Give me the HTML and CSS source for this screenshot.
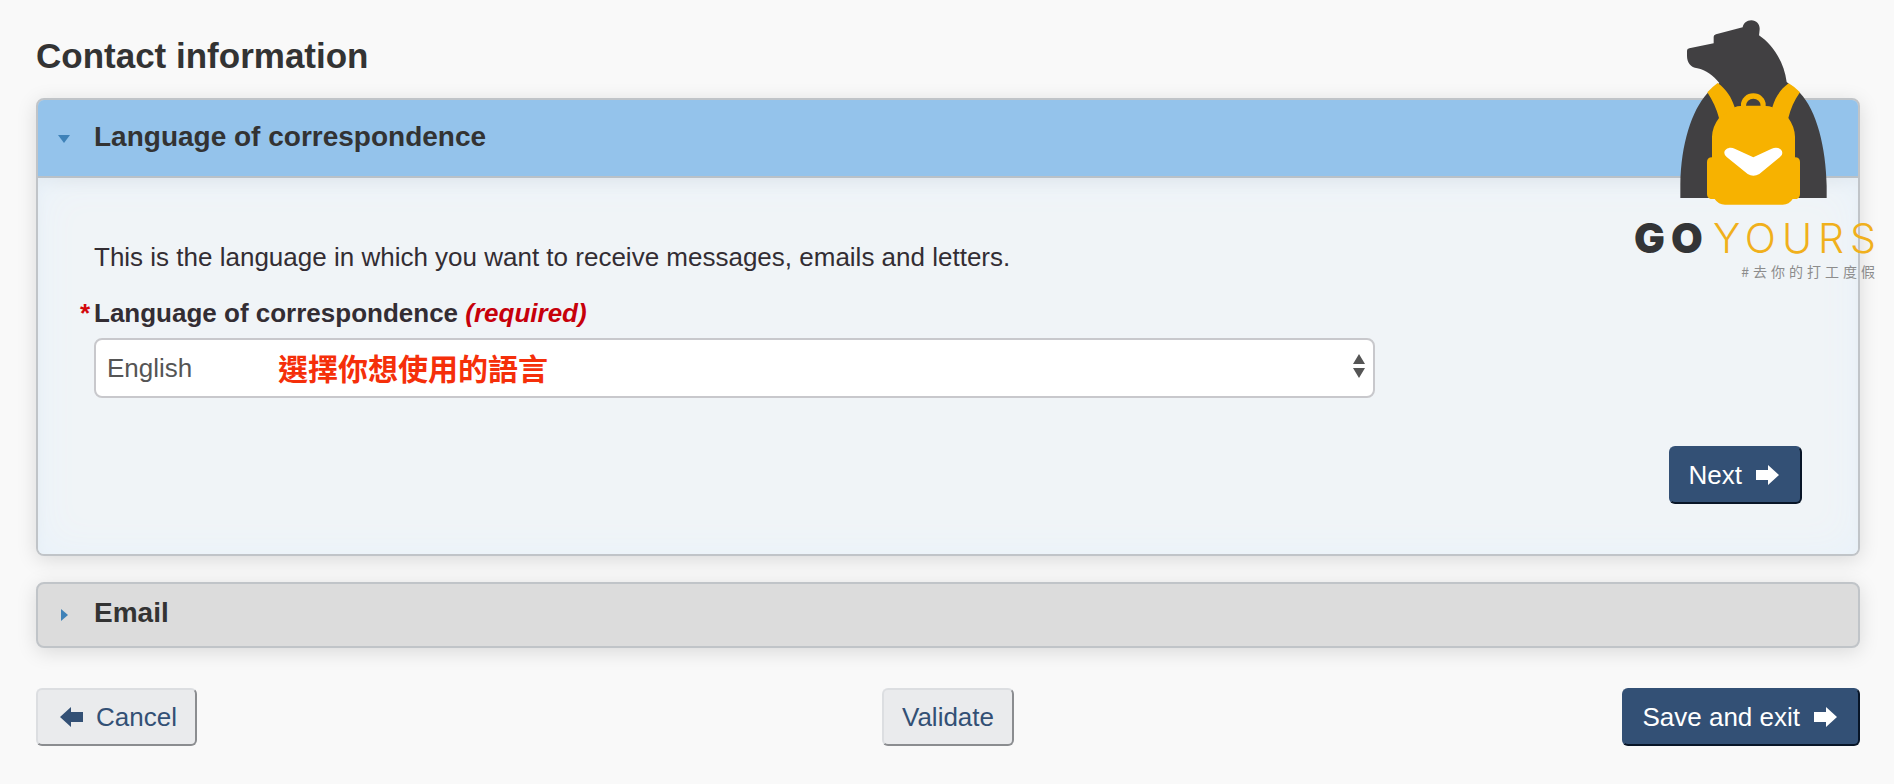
FILE: index.html
```html
<!DOCTYPE html>
<html lang="en">
<head>
    <meta charset="UTF-8">
    <meta name="viewport" content="width=device-width, initial-scale=1.0">
    <title>Contact information</title>
    <link rel="stylesheet" href="styles.css">
</head>
<body>
    <main>
        <h1>Contact information</h1>
        <form>
            <details class="panel" open>
                <summary>
                    <svg class="caret" viewBox="0 0 12 8"><path d="M0 0h12L6 8z"/></svg>
                    <h2>Language of correspondence</h2>
                </summary>
                <div class="panel-body">
                    <p>This is the language in which you want to receive messages, emails and letters.</p>
                    <label for="language">Language of correspondence <em>(required)</em></label>
                    <div class="select-box">
                        <select id="language" required>
                            <option>English</option>
                            <option>French</option>
                        </select>
                        <svg class="select-arrows" viewBox="0 0 12 24"><path d="M6 0l6 10H0zM6 24l6-10H0z"/></svg>
                        <span class="note" lang="zh-Hant">選擇你想使用的語言</span>
                    </div>
                    <div class="panel-actions">
                        <button type="button" class="btn btn-primary">Next
                            <svg class="arrow" viewBox="0 0 28 22"><path d="M2 6h12V1l11 10-11 10v-5H2z"/></svg>
                        </button>
                    </div>
                </div>
            </details>
            <details class="panel">
                <summary>
                    <svg class="caret" viewBox="0 0 12 12"><path d="M3 0v12l7-6z"/></svg>
                    <h2>Email</h2>
                </summary>
            </details>
            <div class="form-actions">
                <button type="button" class="btn">
                    <svg class="arrow" viewBox="0 0 28 22"><path d="M27 6H15V1L4 11l11 10v-5h12z"/></svg>
                    Cancel</button>
                <button type="button" class="btn">Validate</button>
                <button type="submit" class="btn btn-primary">Save and exit
                    <svg class="arrow" viewBox="0 0 28 22"><path d="M2 6h12V1l11 10-11 10v-5H2z"/></svg>
                </button>
            </div>
        </form>
    </main>
    <div class="logo">
        <svg class="logo-bear" viewBox="180 58 441 555">
            <!-- bear -->
            <path fill="#414042" d="M181 592V552C183 430 215 330 262 278L298 247C280 225 258 208 232 203C212 200 201 186 201 165V150Q201 144 208 143L281 128V108Q281 103 288 101L368 80C370 68 380 59 394 59C410 59 420 72 419 86Q418 98 417 104C455 130 492 180 500 244L540 277C590 330 618 440 620 555V592Z"/>
            <!-- backpack -->
            <g fill="#f7b200">
                <path d="M262 275Q275 260 293 247C318 265 335 290 344 320L350 360H300L297 352C290 325 278 300 262 275Z"/>
                <path d="M540 275Q525 259 506 248C482 265 465 290 457 320L450 360H502L505 352C512 325 522 300 540 275Z"/>
                <path d="M363 322V312A37 34 0 0 1 437 312V322Z"/>
                <path d="M344 320Q352 316 362 316H438Q448 316 457 320L505 352Q524 378 525 408V470Q540 470 540 484V580Q540 592 530 595H518Q508 612 488 612H315Q295 612 284 595H272Q261 592 261 580V484Q261 470 276 470V408Q277 378 297 352Z"/>
            </g>
            <path fill="#414042" d="M378 315a22 21 0 0 1 44 0Z"/>
            <path fill="#fff" d="M313 457C313 444 330 437 344 444L400 470L455 444C470 437 487 443 487 457Q487 464 480 469L418 520Q400 531 383 520L320 469Q313 463 313 457Z"/>
        </svg>
        <div class="logo-name"><b>GO</b>YOURS</div>
        <div class="logo-tag" lang="zh-Hant">#去你的打工度假</div>
    </div>
</body>
</html>
```

FILE: styles.css
```css
body {
    position: relative;
    margin: 0;
    background-color: #f9f9f9;
    color: #333;
    font-family: "Liberation Sans", Arial, "Noto Sans CJK TC", sans-serif;
    font-size: 26px;
    line-height: 36px;
}
main {
    padding: 34px 34px 36px 36px;
}
h1 {
    margin: 0 0 20px;
    font-size: 35px;
    line-height: 44px;
}
h2 {
    margin: 0;
    font-size: 28px;
    line-height: 38px;
}
.panel {
    margin-bottom: 26px;
    border: 2px solid #c0c4c8;
    border-radius: 8px;
    background-color: #dcdcdc;
    box-shadow: 0 4px 20px rgba(0, 0, 0, 0.13);
}
.panel summary {
    display: flex;
    align-items: center;
    gap: 24px;
    padding: 10px 20px 14px;
    list-style: none;
    cursor: pointer;
}
.panel[open] summary {
    padding: 18px 20px 20px;
    border-bottom: 2px solid #b9c1c8;
    border-radius: 6px 6px 0 0;
    background-color: #94c3eb;
}
.caret {
    width: 12px;
    margin-top: 4px;
    fill: #3f82b8;
}
.panel-body {
    padding: 61px 56px 50px;
    border-radius: 0 0 6px 6px;
    background-color: #f0f4f7;
    box-shadow: inset 0 0 40px #e8f2fb, inset 0 8px 16px -6px rgba(0, 0, 0, 0.12);
}
.panel-body p {
    margin: 0 0 20px;
    color: #332d33;
}
label {
    position: relative;
    display: block;
    margin-bottom: 7px;
    color: #332d33;
    font-weight: bold;
}
label::before {
    content: "*";
    position: absolute;
    right: 100%;
    margin-right: 4px;
    color: #d3080c;
}
label em {
    color: #c7000b;
}
.select-box {
    position: relative;
    width: 75%;
}
select {
    width: 100%;
    height: 60px;
    padding: 0 11px;
    border: 2px solid #c8c8cc;
    border-radius: 8px;
    background-color: #fff;
    color: #555;
    font: inherit;
    appearance: none;
}
.select-arrows {
    position: absolute;
    top: 16px;
    right: 10px;
    width: 12px;
    height: 24px;
    fill: #555;
    pointer-events: none;
}
.note {
    position: absolute;
    top: 11px;
    left: 184px;
    color: #f52f0a;
    font-family: "Noto Sans CJK TC", sans-serif;
    font-size: 30px;
    font-weight: 700;
    pointer-events: none;
}
.panel-actions {
    display: flex;
    justify-content: flex-end;
    margin-top: 48px;
}
.btn {
    display: inline-flex;
    align-items: center;
    gap: 12px;
    height: 58px;
    padding: 0 18px;
    border: 2px solid;
    border-color: #dcdee1 #8b8d90 #8b8d90 #dcdee1;
    border-radius: 6px;
    background-color: #eaebed;
    color: #335075;
    font: inherit;
    cursor: pointer;
}
.btn-primary {
    border-color: #335075 #081527 #081527 #335075;
    background-color: #335075;
    color: #fff;
}
.arrow {
    width: 28px;
    height: 22px;
    fill: currentColor;
}
.form-actions {
    display: grid;
    grid-template-columns: 1fr auto 1fr;
    padding-top: 14px;
}
.form-actions .btn:first-child {
    justify-self: start;
}
.form-actions .btn:last-child {
    justify-self: end;
}
.logo {
    position: absolute;
    top: 20px;
    right: 18px;
    width: 242px;
    text-align: right;
}
.logo-bear {
    display: block;
    width: 147px;
    margin-left: 46px;
}
.logo-name {
    display: flex;
    justify-content: space-between;
    margin-top: 11px;
    margin-right: -6px;
    color: #f0b01c;
    font-family: Inter, sans-serif;
    font-size: 41px;
    font-weight: 300;
    letter-spacing: 6px;
    line-height: 44px;
}
.logo-name b {
    color: #333436;
    font-weight: 900;
}
.logo-tag {
    margin-right: -3px;
    color: #8c8c8c;
    font-family: "Noto Sans CJK TC", sans-serif;
    font-size: 14px;
    letter-spacing: 4px;
    line-height: 22px;
}
```
